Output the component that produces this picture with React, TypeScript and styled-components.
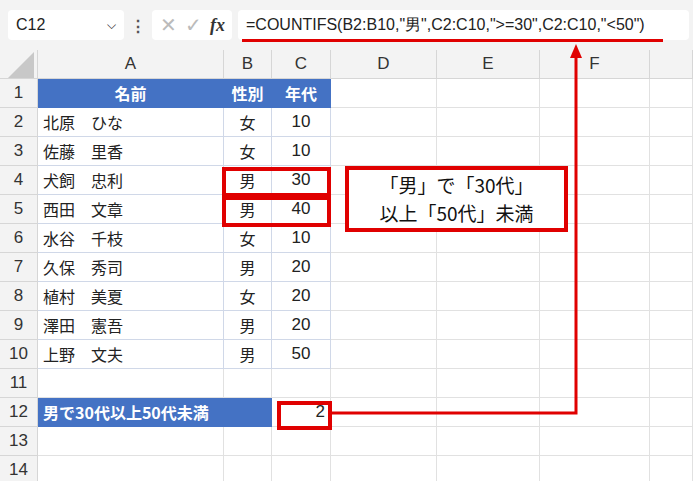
import React from "react";
import styled, { createGlobalStyle } from "styled-components";

const G = createGlobalStyle`
  body { margin:0; background:#fff; font-family: "Noto Sans CJK JP", "Liberation Sans", sans-serif; }
`;
const Page = styled.div`position:relative;width:693px;height:481px;overflow:hidden;background:#fff;`;
const Bar = styled.div`display:flex;align-items:center;gap:6px;height:50px;padding:0 4px 0 8px;background:#f3f3f3;box-sizing:border-box;`;
const Box = styled.div<{ w?: number; grow?: boolean }>`
  height:30px;background:#fff;border-radius:4px;display:flex;align-items:center;box-sizing:border-box;
  ${p => p.w ? `width:${p.w}px;` : ""} ${p => p.grow ? "flex:1;" : ""}
  padding:0 8px;font-family:"Liberation Sans",sans-serif;font-size:16px;color:#222;
`;
const Grid = styled.div`
  display:grid;grid-template-columns:38px 186px 48px 59px 106px 103px 110px 43px;
  grid-auto-rows:29px;font-size:16px;
`;
const Cell = styled.div<{ kind?: string; align?: string }>`
  border-right:1px solid #e1e1e1;border-bottom:1px solid #e1e1e1;box-sizing:border-box;
  display:flex;align-items:center;padding:0 5px;color:#222;white-space:nowrap;
  justify-content:${p => p.align || "flex-start"};
  ${p => p.kind === "head" ? "background:#f3f3f3;color:#333;font-family:'Liberation Sans',sans-serif;font-size:17px;justify-content:center;border-color:#d6d6d6;" : ""}
  ${p => p.kind === "rh" ? "background:#f3f3f3;color:#333;font-family:'Liberation Sans',sans-serif;font-size:17px;justify-content:center;border-color:#d6d6d6;" : ""}
  ${p => p.kind === "blue" ? "background:#4472c4;color:#fff;font-weight:bold;border-color:#4472c4;" : ""}
  ${p => p.kind === "data" ? "border-right-color:#d0d8e8;border-bottom-color:#d0d8e8;" : ""}
`;
const Num = styled.span`font-family:"Liberation Sans",sans-serif;font-size:17px;`;
const Red = styled.div<{ x: number; y: number; w: number; h: number }>`
  position:absolute;left:${p => p.x}px;top:${p => p.y}px;width:${p => p.w}px;height:${p => p.h}px;
  border:4px solid #e00000;box-sizing:border-box;
`;
const Note = styled(Red)`background:#fff;display:flex;flex-direction:column;align-items:center;justify-content:center;font-size:19px;line-height:28px;color:#111;`;
const Corner = styled.div`width:0;height:0;border-left:26px solid transparent;border-bottom:26px solid #c8c8c8;margin:2px 0 0 8px;`;

const rows: [string, string, string][] = [
  ["北原　ひな","女","10"],["佐藤　里香","女","10"],["犬飼　忠利","男","30"],["西田　文章","男","40"],
  ["水谷　千枝","女","10"],["久保　秀司","男","20"],["植村　美夏","女","20"],["澤田　憲吾","男","20"],["上野　文夫","男","50"],
];

export default function App() {
  const empties = (n: number) => Array.from({ length: n }, (_, i) => <Cell key={"e" + i} />);
  return (
    <Page>
      <G />
      <Bar>
        <Box w={116} style={{ justifyContent: "space-between" }}>C12<span style={{ fontSize: 12 }}>⌵</span></Box>
        <span style={{ color: "#555", fontWeight: "bold" }}>⋮</span>
        <Box w={80} style={{ gap: 8, color: "#bbb", fontSize: 20 }}>
          <span>✕</span><span>✓</span><i style={{ color: "#333", fontFamily: "Liberation Serif", fontWeight: "bold", fontSize: 18 }}>fx</i>
        </Box>
        <Box grow>=COUNTIFS(B2:B10,"男",C2:C10,"&gt;=30",C2:C10,"&lt;50")</Box>
      </Bar>
      <Grid>
        <Cell kind="head" style={{ padding: 0, alignItems: "flex-start", justifyContent: "flex-start" }}><Corner /></Cell>
        {["A","B","C","D","E","F",""].map(c => <Cell kind="head" key={c}>{c}</Cell>)}
        <Cell kind="rh">1</Cell>
        <Cell kind="blue" align="center">名前</Cell><Cell kind="blue" align="center">性別</Cell><Cell kind="blue" align="center">年代</Cell>
        {empties(3)}<Cell />
        {rows.map((r, i) => (
          <React.Fragment key={i}>
            <Cell kind="rh">{i + 2}</Cell>
            <Cell kind="data">{r[0]}</Cell>
            <Cell kind="data" align="center">{r[1]}</Cell>
            <Cell kind="data" align="center"><Num>{r[2]}</Num></Cell>
            {empties(4)}
          </React.Fragment>
        ))}
        <Cell kind="rh">11</Cell>{empties(7)}
        <Cell kind="rh">12</Cell>
        <Cell kind="blue" style={{ gridColumn: "span 2" }}>男で30代以上50代未満</Cell>
        <Cell align="flex-end"><Num>2</Num></Cell>{empties(4)}
        <Cell kind="rh">13</Cell>{empties(7)}
        <Cell kind="rh">14</Cell>{empties(7)}
      </Grid>
      <div style={{ position: "absolute", left: 242, top: 39, width: 421, height: 3, background: "#e00000" }} />
      <Red x={222} y={167} w={109} h={30} />
      <Red x={222} y={196} w={109} h={31} />
      <Note x={345} y={166} w={223} h={66}><span>「男」で「30代」</span><span>以上「50代」未満</span></Note>
      <Red x={277} y={401} w={55} h={29} />
      <svg style={{ position: "absolute", left: 0, top: 0 }} width="693" height="481">
        <polyline points="331,413 576,413 576,56" fill="none" stroke="#e00000" strokeWidth="3" />
        <polygon points="570,58 582,58 576,44" fill="#e00000" />
      </svg>
    </Page>
  );
}
